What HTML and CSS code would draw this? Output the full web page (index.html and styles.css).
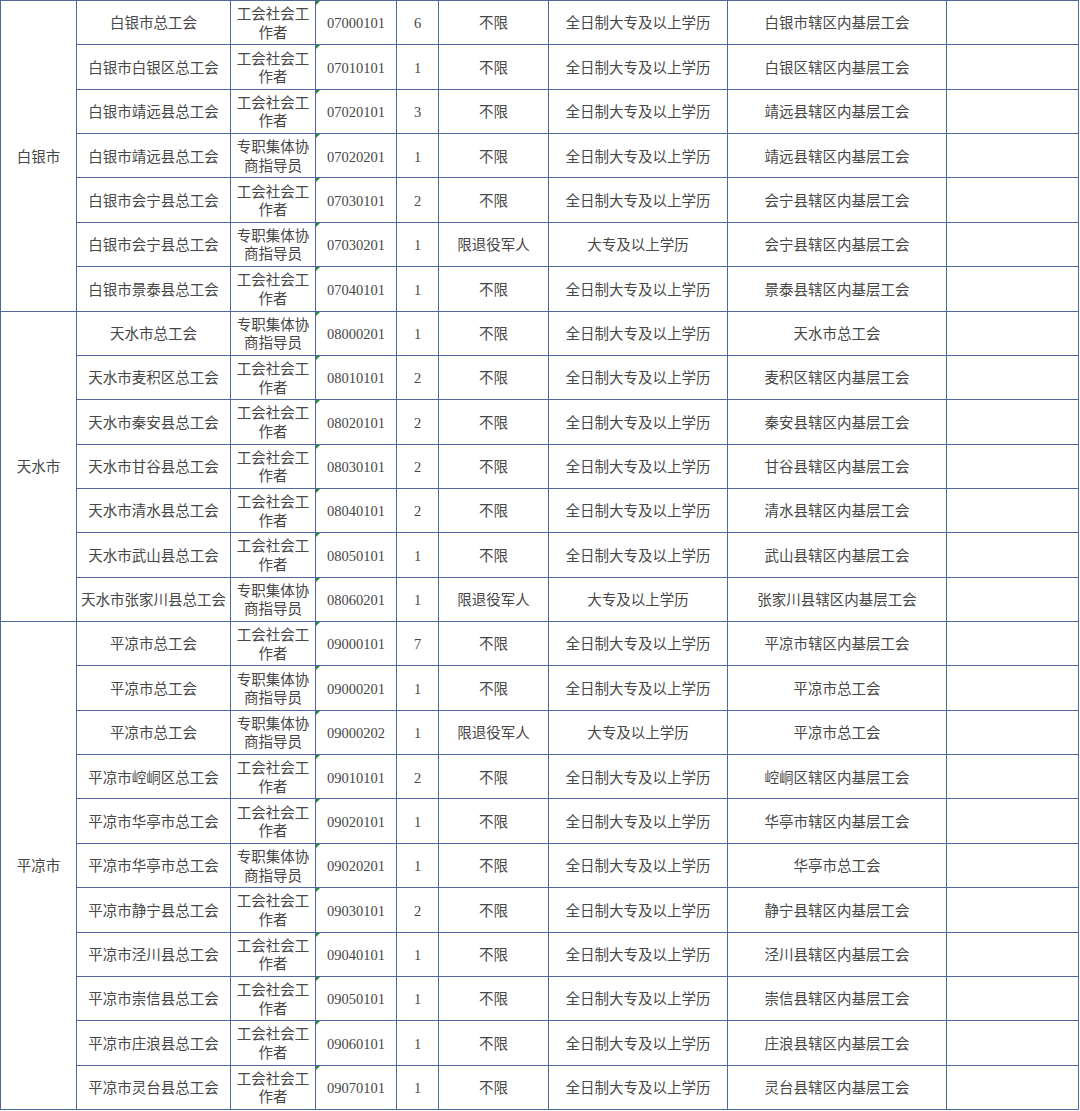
FILE: index.html
```html
<!DOCTYPE html>
<html lang="zh-CN">
<head>
<meta charset="utf-8">
<title>岗位表</title>
<link rel="stylesheet" href="styles.css">
</head>
<body>
<div class="sheet">
  <div class="cell city span7">白银市</div>
  <div class="cell">白银市总工会</div><div class="cell">工会社会工作者</div><div class="cell code">07000101</div><div class="cell">6</div><div class="cell">不限</div><div class="cell">全日制大专及以上学历</div><div class="cell">白银市辖区内基层工会</div><div class="cell"></div>
  <div class="cell">白银市白银区总工会</div><div class="cell">工会社会工作者</div><div class="cell code">07010101</div><div class="cell">1</div><div class="cell">不限</div><div class="cell">全日制大专及以上学历</div><div class="cell">白银区辖区内基层工会</div><div class="cell"></div>
  <div class="cell">白银市靖远县总工会</div><div class="cell">工会社会工作者</div><div class="cell code">07020101</div><div class="cell">3</div><div class="cell">不限</div><div class="cell">全日制大专及以上学历</div><div class="cell">靖远县辖区内基层工会</div><div class="cell"></div>
  <div class="cell">白银市靖远县总工会</div><div class="cell">专职集体协商指导员</div><div class="cell code">07020201</div><div class="cell">1</div><div class="cell">不限</div><div class="cell">全日制大专及以上学历</div><div class="cell">靖远县辖区内基层工会</div><div class="cell"></div>
  <div class="cell">白银市会宁县总工会</div><div class="cell">工会社会工作者</div><div class="cell code">07030101</div><div class="cell">2</div><div class="cell">不限</div><div class="cell">全日制大专及以上学历</div><div class="cell">会宁县辖区内基层工会</div><div class="cell"></div>
  <div class="cell">白银市会宁县总工会</div><div class="cell">专职集体协商指导员</div><div class="cell code">07030201</div><div class="cell">1</div><div class="cell">限退役军人</div><div class="cell">大专及以上学历</div><div class="cell">会宁县辖区内基层工会</div><div class="cell"></div>
  <div class="cell">白银市景泰县总工会</div><div class="cell">工会社会工作者</div><div class="cell code">07040101</div><div class="cell">1</div><div class="cell">不限</div><div class="cell">全日制大专及以上学历</div><div class="cell">景泰县辖区内基层工会</div><div class="cell"></div>

  <div class="cell city span7">天水市</div>
  <div class="cell">天水市总工会</div><div class="cell">专职集体协商指导员</div><div class="cell code">08000201</div><div class="cell">1</div><div class="cell">不限</div><div class="cell">全日制大专及以上学历</div><div class="cell">天水市总工会</div><div class="cell"></div>
  <div class="cell">天水市麦积区总工会</div><div class="cell">工会社会工作者</div><div class="cell code">08010101</div><div class="cell">2</div><div class="cell">不限</div><div class="cell">全日制大专及以上学历</div><div class="cell">麦积区辖区内基层工会</div><div class="cell"></div>
  <div class="cell">天水市秦安县总工会</div><div class="cell">工会社会工作者</div><div class="cell code">08020101</div><div class="cell">2</div><div class="cell">不限</div><div class="cell">全日制大专及以上学历</div><div class="cell">秦安县辖区内基层工会</div><div class="cell"></div>
  <div class="cell">天水市甘谷县总工会</div><div class="cell">工会社会工作者</div><div class="cell code">08030101</div><div class="cell">2</div><div class="cell">不限</div><div class="cell">全日制大专及以上学历</div><div class="cell">甘谷县辖区内基层工会</div><div class="cell"></div>
  <div class="cell">天水市清水县总工会</div><div class="cell">工会社会工作者</div><div class="cell code">08040101</div><div class="cell">2</div><div class="cell">不限</div><div class="cell">全日制大专及以上学历</div><div class="cell">清水县辖区内基层工会</div><div class="cell"></div>
  <div class="cell">天水市武山县总工会</div><div class="cell">工会社会工作者</div><div class="cell code">08050101</div><div class="cell">1</div><div class="cell">不限</div><div class="cell">全日制大专及以上学历</div><div class="cell">武山县辖区内基层工会</div><div class="cell"></div>
  <div class="cell">天水市张家川县总工会</div><div class="cell">专职集体协商指导员</div><div class="cell code">08060201</div><div class="cell">1</div><div class="cell">限退役军人</div><div class="cell">大专及以上学历</div><div class="cell">张家川县辖区内基层工会</div><div class="cell"></div>

  <div class="cell city span11">平凉市</div>
  <div class="cell">平凉市总工会</div><div class="cell">工会社会工作者</div><div class="cell code">09000101</div><div class="cell">7</div><div class="cell">不限</div><div class="cell">全日制大专及以上学历</div><div class="cell">平凉市辖区内基层工会</div><div class="cell"></div>
  <div class="cell">平凉市总工会</div><div class="cell">专职集体协商指导员</div><div class="cell code">09000201</div><div class="cell">1</div><div class="cell">不限</div><div class="cell">全日制大专及以上学历</div><div class="cell">平凉市总工会</div><div class="cell"></div>
  <div class="cell">平凉市总工会</div><div class="cell">专职集体协商指导员</div><div class="cell code">09000202</div><div class="cell">1</div><div class="cell">限退役军人</div><div class="cell">大专及以上学历</div><div class="cell">平凉市总工会</div><div class="cell"></div>
  <div class="cell">平凉市崆峒区总工会</div><div class="cell">工会社会工作者</div><div class="cell code">09010101</div><div class="cell">2</div><div class="cell">不限</div><div class="cell">全日制大专及以上学历</div><div class="cell">崆峒区辖区内基层工会</div><div class="cell"></div>
  <div class="cell">平凉市华亭市总工会</div><div class="cell">工会社会工作者</div><div class="cell code">09020101</div><div class="cell">1</div><div class="cell">不限</div><div class="cell">全日制大专及以上学历</div><div class="cell">华亭市辖区内基层工会</div><div class="cell"></div>
  <div class="cell">平凉市华亭市总工会</div><div class="cell">专职集体协商指导员</div><div class="cell code">09020201</div><div class="cell">1</div><div class="cell">不限</div><div class="cell">全日制大专及以上学历</div><div class="cell">华亭市总工会</div><div class="cell"></div>
  <div class="cell">平凉市静宁县总工会</div><div class="cell">工会社会工作者</div><div class="cell code">09030101</div><div class="cell">2</div><div class="cell">不限</div><div class="cell">全日制大专及以上学历</div><div class="cell">静宁县辖区内基层工会</div><div class="cell"></div>
  <div class="cell">平凉市泾川县总工会</div><div class="cell">工会社会工作者</div><div class="cell code">09040101</div><div class="cell">1</div><div class="cell">不限</div><div class="cell">全日制大专及以上学历</div><div class="cell">泾川县辖区内基层工会</div><div class="cell"></div>
  <div class="cell">平凉市崇信县总工会</div><div class="cell">工会社会工作者</div><div class="cell code">09050101</div><div class="cell">1</div><div class="cell">不限</div><div class="cell">全日制大专及以上学历</div><div class="cell">崇信县辖区内基层工会</div><div class="cell"></div>
  <div class="cell">平凉市庄浪县总工会</div><div class="cell">工会社会工作者</div><div class="cell code">09060101</div><div class="cell">1</div><div class="cell">不限</div><div class="cell">全日制大专及以上学历</div><div class="cell">庄浪县辖区内基层工会</div><div class="cell"></div>
  <div class="cell">平凉市灵台县总工会</div><div class="cell">工会社会工作者</div><div class="cell code">09070101</div><div class="cell">1</div><div class="cell">不限</div><div class="cell">全日制大专及以上学历</div><div class="cell">灵台县辖区内基层工会</div><div class="cell"></div>
</div>
</body>
</html>
```

FILE: styles.css
```css
html, body {
  margin: 0;
  padding: 0;
  background: #ffffff;
}

.sheet {
  display: inline-grid;
  grid-template-columns: 75px 153px 84px 80px 41px 109px 178px 218px 131px;
  grid-template-rows: repeat(25, 43.36px);
  gap: 1px;
  padding: 1px;
  background: #52699f;
  font-family: "Liberation Serif", "Noto Sans CJK SC", serif;
  font-size: 14.5px;
  line-height: 18.5px;
  color: #474747;
}

.cell {
  background: #ffffff;
  display: flex;
  align-items: center;
  justify-content: center;
  text-align: center;
  padding-top: 2px;
  box-sizing: border-box;
  position: relative;
}

.city {
  grid-column: 1;
}

.span7 {
  grid-row: span 7;
}

.span11 {
  grid-row: span 11;
}

.code::before {
  content: "";
  position: absolute;
  left: 0;
  top: 0;
  width: 0;
  height: 0;
  border-top: 4px solid #1f8f3a;
  border-right: 4px solid transparent;
}
```
